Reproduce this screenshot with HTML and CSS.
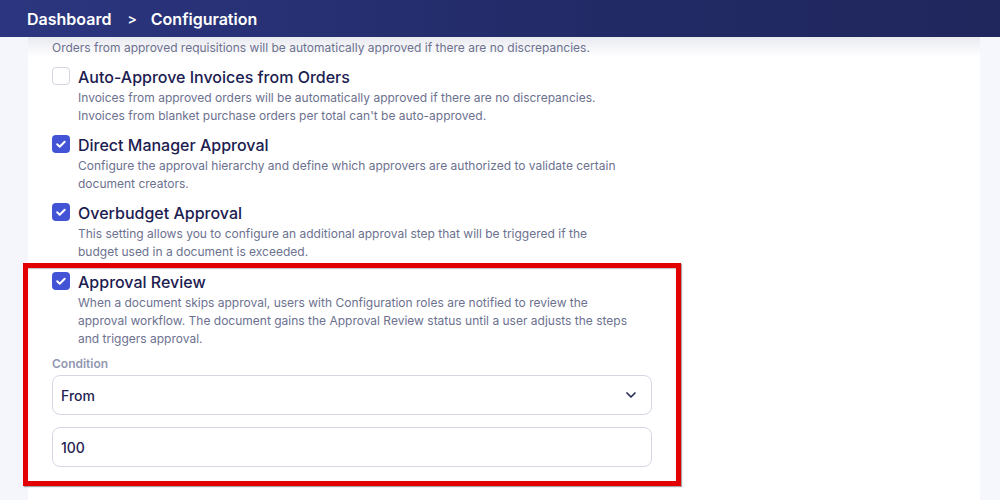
FILE: index.html
```html
<!DOCTYPE html>
<html lang="en">
<head>
<meta charset="utf-8">
<title>Configuration</title>
<link rel="stylesheet" href="styles.css">
</head>
<body>
<header class="topbar">
  <span class="crumb">Dashboard</span>
  <span class="sep">&gt;</span>
  <span class="crumb">Configuration</span>
</header>
<div class="layout">
  <aside class="side-left"></aside>
  <main class="main">
    <p class="desc first">Orders from approved requisitions will be automatically approved if there are no discrepancies.</p>

    <div class="setting">
      <span class="box"></span>
      <div class="text">
        <div class="title">Auto-Approve Invoices from Orders</div>
        <p class="desc">Invoices from approved orders will be automatically approved if there are no discrepancies.<br>Invoices from blanket purchase orders per total can't be auto-approved.</p>
      </div>
    </div>

    <div class="setting">
      <span class="box checked"><svg viewBox="0 0 18 18" width="18" height="18"><path d="M5.2 9.3l2.5 2.4 5-5" fill="none" stroke="#fff" stroke-width="2" stroke-linecap="round" stroke-linejoin="round"/></svg></span>
      <div class="text">
        <div class="title">Direct Manager Approval</div>
        <p class="desc">Configure the approval hierarchy and define which approvers are authorized to validate certain<br>document creators.</p>
      </div>
    </div>

    <div class="setting pre">
      <span class="box checked"><svg viewBox="0 0 18 18" width="18" height="18"><path d="M5.2 9.3l2.5 2.4 5-5" fill="none" stroke="#fff" stroke-width="2" stroke-linecap="round" stroke-linejoin="round"/></svg></span>
      <div class="text">
        <div class="title">Overbudget Approval</div>
        <p class="desc">This setting allows you to configure an additional approval step that will be triggered if the<br>budget used in a document is exceeded.</p>
      </div>
    </div>

    <section class="highlight">
      <div class="setting last">
        <span class="box checked"><svg viewBox="0 0 18 18" width="18" height="18"><path d="M5.2 9.3l2.5 2.4 5-5" fill="none" stroke="#fff" stroke-width="2" stroke-linecap="round" stroke-linejoin="round"/></svg></span>
        <div class="text">
          <div class="title">Approval Review</div>
          <p class="desc">When a document skips approval, users with Configuration roles are notified to review the<br>approval workflow. The document gains the Approval Review status until a user adjusts the steps<br>and triggers approval.</p>
        </div>
      </div>
      <label class="label">Condition</label>
      <div class="field select">
        <span>From</span>
        <svg class="chev" viewBox="0 0 10 6" width="10" height="6"><path d="M1 1l4 4 4-4" fill="none" stroke="#2a2e5a" stroke-width="1.7" stroke-linecap="round" stroke-linejoin="round"/></svg>
      </div>
      <div class="field">
        <span>100</span>
      </div>
    </section>
  </main>
  <aside class="side-right"></aside>
</div>
</body>
</html>
```
FILE: styles.css
```css
* { box-sizing: border-box; }
html, body { margin: 0; padding: 0; }
body {
  font-family: Inter, "Noto Sans", "Liberation Sans", sans-serif;
  background: #ffffff;
  width: 1000px;
  height: 500px;
  overflow: hidden;
}
.topbar {
  height: 37px;
  display: flex;
  align-items: center;
  padding-left: 27px;
  background: linear-gradient(90deg, #2c3680 0%, #222a66 60%, #20275d 100%);
  color: #ffffff;
  font-size: 16px;
  font-weight: 600;
  position: relative;
  z-index: 2;
}
.sep {
  font-size: 14px;
  font-weight: 600;
  margin: 0 14px 0 16px;
}
.layout {
  display: flex;
  height: 463px;
}
.side-left {
  width: 28px;
  background: #f5f6fb;
}
.side-right {
  width: 20px;
  background: #f6f7fd;
}
.main {
  flex: 1;
  padding: 2px 0 0 24px;
  background: linear-gradient(180deg, #e9eaf0 0px, #ffffff 20px);
}
.desc {
  margin: 0;
  padding-top: 1px;
  font-size: 12px;
  line-height: 18px;
  color: #6c718f;
  white-space: nowrap;
}
.desc.first { margin-bottom: 8px; padding-top: 0; }
.setting {
  display: flex;
  gap: 8px;
  margin-bottom: 8px;
}
.setting.pre { margin-bottom: 2px; }
.setting.last { margin-bottom: 8px; }
.box {
  flex: none;
  width: 18px;
  height: 18px;
  margin-top: 2px;
  border: 1.5px solid #d4d6e1;
  border-radius: 4px;
  background: #fff;
  display: flex;
}
.box.checked {
  border: none;
  background: #4353d6;
}
.title {
  font-size: 16px;
  line-height: 22px;
  padding-top: 1px;
  color: #1c2050;
  font-weight: 450;
}
.highlight {
  margin-left: -29px;
  width: 658px;
  border: 5px solid #e20000;
  box-shadow: 1px 1px 1px rgba(0, 0, 0, 0.35), inset 0 1px 1px rgba(0, 0, 0, 0.25);
  padding: 2px 24px 14px 24px;
}
.label {
  display: block;
  font-size: 12px;
  line-height: 16px;
  font-weight: 600;
  color: #9398b2;
  margin-bottom: 3px;
}
.field {
  height: 40px;
  border: 1px solid #d6d7e4;
  border-radius: 8px;
  display: flex;
  align-items: center;
  justify-content: space-between;
  padding: 0 15px 0 8px;
  font-size: 14px;
  font-weight: 500;
  color: #1f2352;
}
.field.select { margin-bottom: 12px; }
.chev { display: block; }
```
